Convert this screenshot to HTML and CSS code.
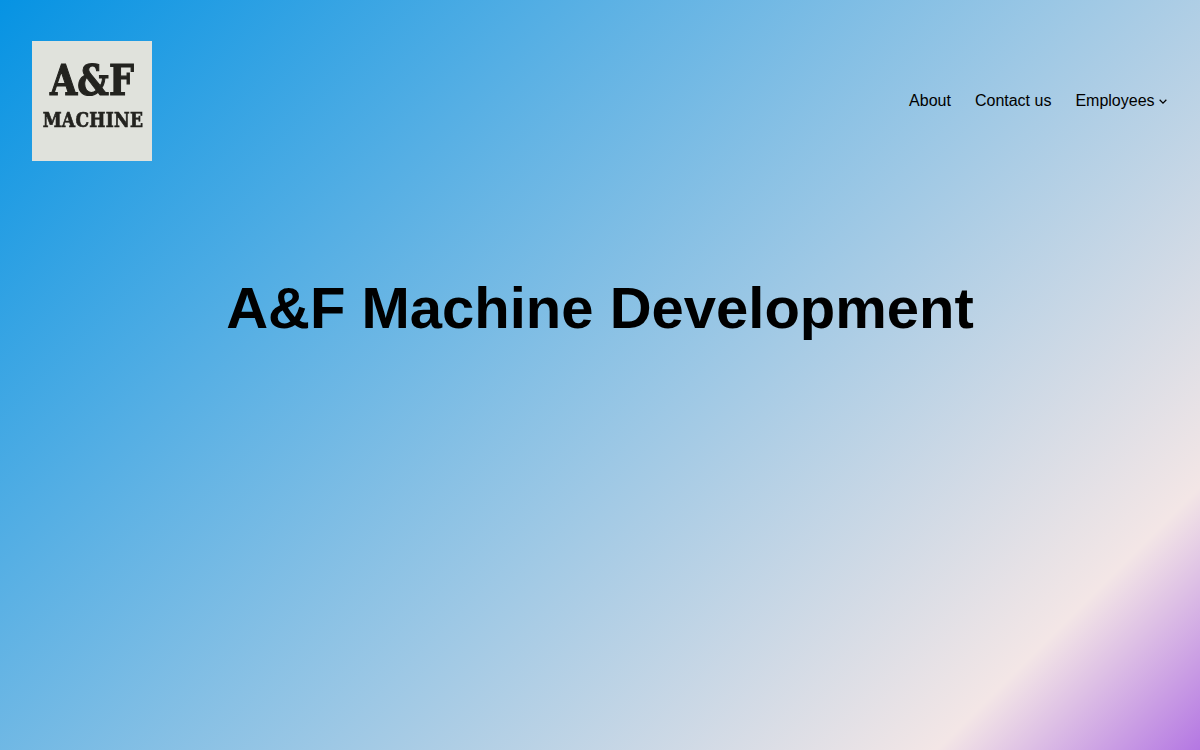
FILE: index.html
```html
<!DOCTYPE html>
<html lang="en">
<head>
    <meta charset="UTF-8">
    <meta name="viewport" content="width=device-width, initial-scale=1.0">
    <title>A&amp;F Machine Development</title>
    <link rel="stylesheet" href="styles.css">
</head>
<body>
    <header class="site-header">
        <a class="logo" href="#">
            <span class="logo-big">A&amp;F</span>
            <span class="logo-small">MACHINE</span>
        </a>
        <nav class="main-nav">
            <a href="#">About</a>
            <a href="#">Contact us</a>
            <a href="#" class="has-submenu">Employees
                <svg class="submenu-icon" viewBox="0 0 12 12" aria-hidden="true"><path d="M2 4.5L6 8.5L10 4.5" fill="none" stroke="currentColor" stroke-width="1.5"></path></svg>
            </a>
        </nav>
    </header>
    <main>
        <h1 class="page-title">A&amp;F Machine Development</h1>
    </main>
</body>
</html>
```

FILE: styles.css
```css
body {
    font-family: "Liberation Sans", Arial, sans-serif;
    margin: 0;
    min-height: 750px;
    overflow: hidden;
    color: #000;
    background: linear-gradient(135deg, #0693e3 0%, #f3e6e6 86.5%, #b477e3 100%);
}
.site-header {
    display: flex;
    justify-content: space-between;
    align-items: center;
    padding: 41px 32px 0;
}
.logo {
    width: 120px;
    height: 120px;
    background-color: #e0e2dc;
    color: #23231f;
    display: flex;
    flex-direction: column;
    align-items: center;
    text-decoration: none;
    font-family: "DejaVu Serif", serif;
    font-stretch: condensed;
    font-weight: bold;
}
.logo-big {
    font-size: 39px;
    line-height: 44px;
    margin-top: 17px;
    transform: scaleY(1.08);
    -webkit-text-stroke: 1px #23231f;
    filter: blur(0.4px);
}
.logo-small {
    font-size: 19px;
    line-height: 22px;
    margin-top: 7px;
    margin-left: 2px;
    letter-spacing: 0.3px;
    transform: scaleY(1.05);
    -webkit-text-stroke: 0.6px #23231f;
    filter: blur(0.4px);
}
.main-nav {
    display: flex;
    gap: 24px;
    font-size: 16px;
}
.main-nav a {
    color: #000;
    text-decoration: none;
}
.submenu-icon {
    width: 10px;
    height: 10px;
    margin-left: -1px;
}
.page-title {
    font-size: 58px;
    line-height: 1.2;
    text-align: center;
    margin: 112px 0 0;
}
```
